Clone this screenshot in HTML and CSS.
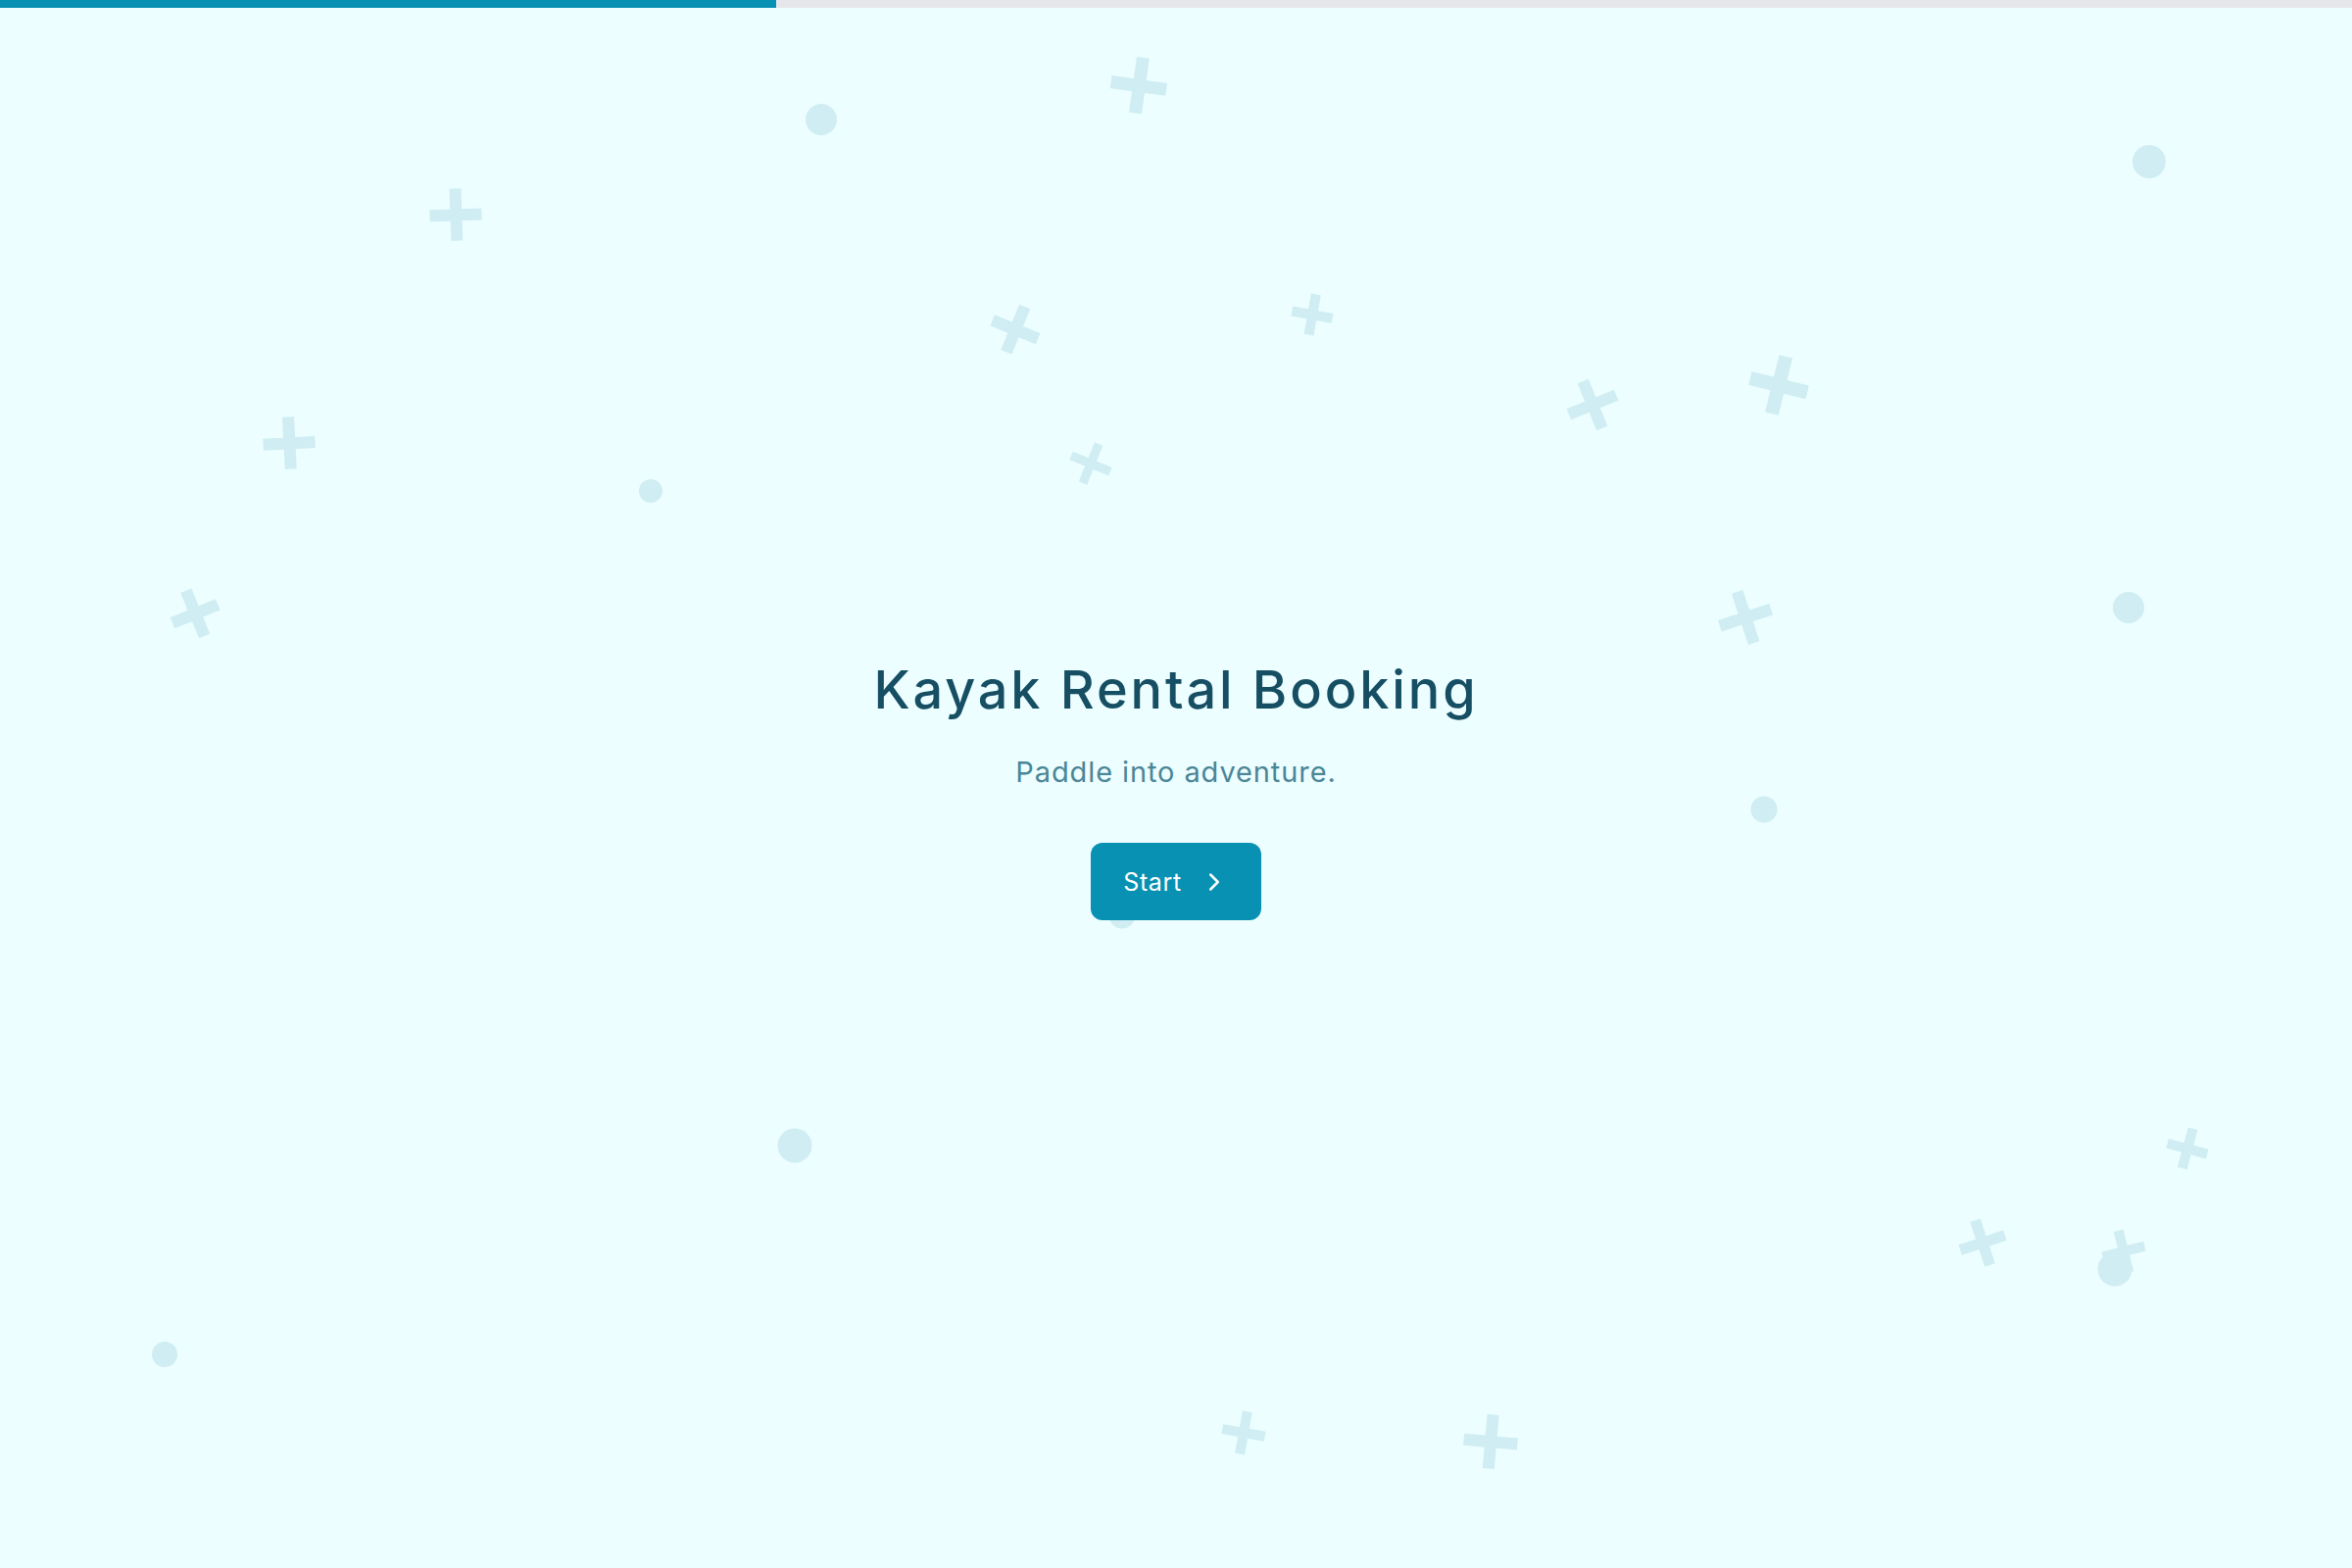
FILE: index.html
```html
<!DOCTYPE html>
<html lang="en">
<head>
<meta charset="utf-8">
<title>Kayak Rental Booking</title>
<link rel="stylesheet" href="styles.css">
</head>
<body>
<div class="progress"><div class="progress-fill" style="width:33%"></div></div>
<div class="decor" aria-hidden="true">
  <span class="cross" style="--x:1162px;--y:87px;--s:57px;--r:8deg"></span>
  <span class="cross" style="--x:465px;--y:219px;--s:53px;--r:-2deg"></span>
  <span class="cross" style="--x:1036px;--y:336px;--s:50px;--r:22deg"></span>
  <span class="cross" style="--x:1339px;--y:321px;--s:42px;--r:10deg"></span>
  <span class="cross" style="--x:1625px;--y:413px;--s:52px;--r:-22deg"></span>
  <span class="cross" style="--x:1815px;--y:393px;--s:60px;--r:14deg"></span>
  <span class="cross" style="--x:295px;--y:452px;--s:53px;--r:-3deg"></span>
  <span class="cross" style="--x:1113px;--y:473px;--s:43px;--r:22deg"></span>
  <span class="cross" style="--x:199px;--y:626px;--s:50px;--r:-22deg"></span>
  <span class="cross" style="--x:1781px;--y:630px;--s:55px;--r:-18deg"></span>
  <span class="cross" style="--x:2232px;--y:1172px;--s:42px;--r:15deg"></span>
  <span class="cross" style="--x:2023px;--y:1268px;--s:48px;--r:-18deg"></span>
  <span class="cross" style="--x:2167px;--y:1277px;--s:44px;--r:-14deg"></span>
  <span class="cross" style="--x:1269px;--y:1462px;--s:44px;--r:10deg"></span>
  <span class="cross" style="--x:1521px;--y:1471px;--s:55px;--r:5deg"></span>

  <span class="dot" style="--x:838px;--y:122px;--s:32px"></span>
  <span class="dot" style="--x:2193px;--y:165px;--s:34px"></span>
  <span class="dot" style="--x:664px;--y:501px;--s:24px"></span>
  <span class="dot" style="--x:2172px;--y:620px;--s:32px"></span>
  <span class="dot" style="--x:1800px;--y:826px;--s:27px"></span>
  <span class="dot" style="--x:1145px;--y:934px;--s:27px"></span>
  <span class="dot" style="--x:811px;--y:1169px;--s:35px"></span>
  <span class="dot" style="--x:168px;--y:1382px;--s:26px"></span>
  <span class="dot" style="--x:2158px;--y:1295px;--s:35px"></span>
</div>
<main class="hero">
  <h1 class="title">Kayak Rental Booking</h1>
  <p class="subtitle">Paddle into adventure.</p>
  <button class="start-btn" type="button">
    <span>Start</span>
    <svg class="chev" viewBox="0 0 24 24" width="30" height="30" fill="none" stroke="currentColor" stroke-width="2" stroke-linecap="round" stroke-linejoin="round"><path d="m9 18 6-6-6-6"/></svg>
  </button>
</main>
</body>
</html>
```

FILE: styles.css
```css
* { box-sizing: border-box; }

html, body {
  margin: 0;
  padding: 0;
}

body {
  background: #ecfeff;
  font-family: Inter, "Noto Sans", "Liberation Sans", sans-serif;
  min-height: 100vh;
  position: relative;
  overflow: hidden;
}

.progress {
  height: 8px;
  background: #e5e7eb;
  position: relative;
  z-index: 2;
}

.progress-fill {
  height: 100%;
  background: #0891b2;
}

.decor {
  position: absolute;
  inset: 0;
  pointer-events: none;
  z-index: 0;
}

.cross {
  position: absolute;
  left: var(--x);
  top: var(--y);
  width: var(--s);
  height: var(--s);
  transform: translate(-50%, -50%) rotate(var(--r));
}

.cross::before,
.cross::after {
  content: "";
  position: absolute;
  background: #cfedf2;
}

.cross::before {
  left: 0;
  right: 0;
  top: 50%;
  height: calc(var(--s) * 0.23);
  transform: translateY(-50%);
}

.cross::after {
  top: 0;
  bottom: 0;
  left: 50%;
  width: calc(var(--s) * 0.23);
  transform: translateX(-50%);
}

.dot {
  position: absolute;
  left: var(--x);
  top: var(--y);
  width: var(--s);
  height: var(--s);
  border-radius: 50%;
  background: #cfedf2;
  transform: translate(-50%, -50%);
}

.hero {
  position: relative;
  z-index: 1;
  min-height: calc(100vh - 8px);
  display: flex;
  flex-direction: column;
  align-items: center;
  justify-content: center;
  padding-top: 3px;
}

.title {
  margin: 0;
  font-size: 54px;
  line-height: 1.2;
  font-weight: 500;
  color: #164e63;
  letter-spacing: 2.9px;
}

.subtitle {
  margin: 32px 0 0;
  font-size: 29px;
  line-height: 1.3;
  font-weight: 400;
  color: #4a8697;
  letter-spacing: 0.9px;
}

.start-btn {
  margin-top: 54px;
  height: 79px;
  padding: 0 33px;
  border: none;
  border-radius: 12px;
  background: #0891b2;
  color: #ffffff;
  font-family: inherit;
  font-size: 25px;
  font-weight: 400;
  letter-spacing: 0.6px;
  display: inline-flex;
  align-items: center;
  gap: 18px;
  cursor: pointer;
}

.chev {
  display: block;
}
```
